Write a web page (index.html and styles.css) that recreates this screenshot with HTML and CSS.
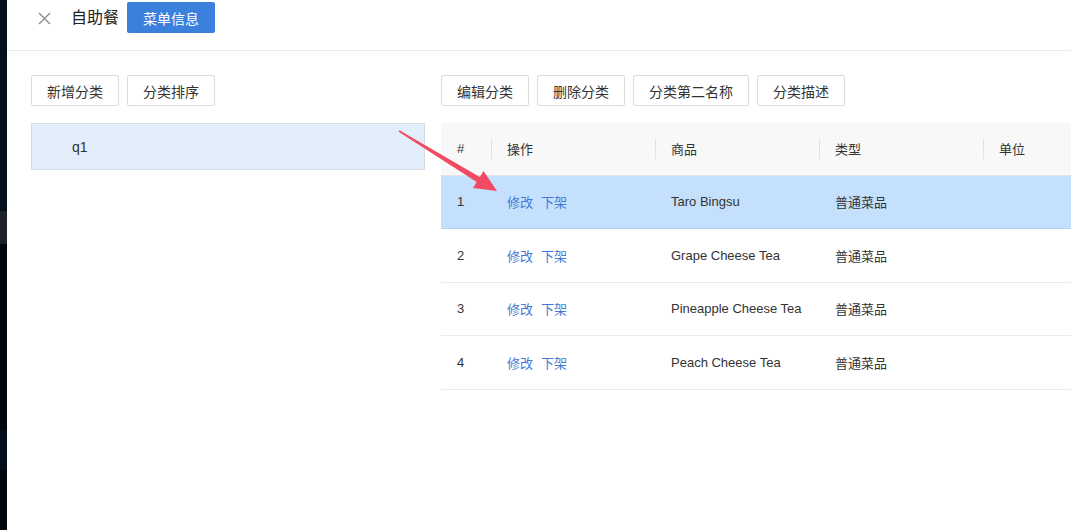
FILE: index.html
```html
<!DOCTYPE html>
<html lang="zh-CN">

<head>
    <meta charset="UTF-8">
    <meta name="viewport" content="width=device-width, initial-scale=1.0">
    <title>自助餐 - 菜单信息</title>

    <link rel="stylesheet" href="styles.css">
</head>

<body>

    <div class="page">

        <div class="edge">
            <div class="edge-top"></div>
            <div class="edge-mid"></div>
            <div class="edge-low"></div>
            <div class="edge-alt"></div>
            <div class="edge-end"></div>
        </div>

        <div class="main">

            <header class="topbar">
                <span class="close">
                    <svg width="13" height="13" viewBox="0 0 13 13">
                        <path d="M1 1 L12 12 M12 1 L1 12" stroke="#8c8c8c" stroke-width="1.4" fill="none" />
                    </svg>
                </span>
                <span class="title">自助餐</span>
                <button class="btn-primary">菜单信息</button>
            </header>

            <section class="content">

                <div class="side">
                    <div class="toolbar">
                        <button class="btn">新增分类</button>
                        <button class="btn">分类排序</button>
                    </div>
                    <div class="category active">q1</div>
                </div>

                <div class="detail">
                    <div class="toolbar">
                        <button class="btn">编辑分类</button>
                        <button class="btn">删除分类</button>
                        <button class="btn">分类第二名称</button>
                        <button class="btn">分类描述</button>
                    </div>

                    <table class="goods">
                        <thead>
                            <tr>
                                <th class="col-no">#</th>
                                <th class="col-op">操作</th>
                                <th class="col-name">商品</th>
                                <th class="col-type">类型</th>
                                <th class="col-unit">单位</th>
                            </tr>
                        </thead>
                        <tbody>
                            <tr class="selected">
                                <td>1</td>
                                <td><a class="link">修改</a><a class="link">下架</a></td>
                                <td>Taro Bingsu</td>
                                <td>普通菜品</td>
                                <td></td>
                            </tr>
                            <tr>
                                <td>2</td>
                                <td><a class="link">修改</a><a class="link">下架</a></td>
                                <td>Grape Cheese Tea</td>
                                <td>普通菜品</td>
                                <td></td>
                            </tr>
                            <tr>
                                <td>3</td>
                                <td><a class="link">修改</a><a class="link">下架</a></td>
                                <td>Pineapple Cheese Tea</td>
                                <td>普通菜品</td>
                                <td></td>
                            </tr>
                            <tr>
                                <td>4</td>
                                <td><a class="link">修改</a><a class="link">下架</a></td>
                                <td>Peach Cheese Tea</td>
                                <td>普通菜品</td>
                                <td></td>
                            </tr>
                        </tbody>
                    </table>
                </div>

            </section>

        </div>
    </div>

    <!-- annotation arrow drawn over the page -->
    <svg class="pointer" width="1071" height="530" viewBox="0 0 1071 530">
        <polygon fill="#f24a63"
            points="398.6,131.7 476.7,182.1 473,188 497,191 483.5,171 479.8,177 399.4,130.3" />
    </svg>

</body>

</html>
```

FILE: styles.css
```css
* {
    box-sizing: border-box;
}

body {
    margin: 0;
    font-family: "Liberation Sans", "Noto Sans CJK SC", sans-serif;
    color: #333;
    background-color: #fff;
    overflow: hidden;
}

.page {
    display: flex;
    width: 1071px;
    height: 530px;
}

/* dark strip of the window behind */
.edge {
    width: 7px;
    display: flex;
    flex-direction: column;
}

.edge-top {
    height: 211px;
    background-color: #03101b;
}

.edge-mid {
    height: 33px;
    background-color: #1e2226;
}

.edge-low {
    height: 186px;
    background-color: #01060c;
}

.edge-alt {
    height: 40px;
    background-color: #020e19;
}

.edge-end {
    flex: 1;
    background-color: #01060c;
}

.main {
    flex: 1;
    min-width: 0;
    overflow: hidden;
}

.topbar {
    height: 51px;
    padding-top: 2px;
    display: flex;
    align-items: flex-start;
    border-bottom: 1px solid #ececec;
}

.close {
    width: 13px;
    height: 13px;
    margin-left: 31px;
    margin-top: 10px;
    display: flex;
}

.title {
    margin-left: 20px;
    font-size: 16px;
    line-height: 31px;
    color: #222;
}

.btn-primary {
    margin-left: 8px;
    height: 31px;
    width: 88px;
    padding: 0;
    border: none;
    border-radius: 2px;
    background-color: #3b80dd;
    color: #fff;
    font-family: inherit;
    font-size: 14px;
}

.content {
    display: flex;
    gap: 16px;
    padding-top: 24px;
    padding-left: 24px;
}

.side {
    width: 394px;
    flex-shrink: 0;
}

.detail {
    flex: 1;
    min-width: 0;
    overflow: hidden;
}

.toolbar {
    display: flex;
    gap: 8px;
    margin-bottom: 17px;
}

.btn {
    height: 31px;
    padding: 0 15px;
    border: 1px solid #dcdcdc;
    border-radius: 2px;
    background-color: #fff;
    color: #333;
    font-family: inherit;
    font-size: 14px;
    white-space: nowrap;
}

.category {
    height: 47px;
    padding-left: 40px;
    display: flex;
    align-items: center;
    font-size: 14px;
    border: 1px solid #d6dce2;
}

.category.active {
    background-color: #e2eef9;
}

.goods {
    border-collapse: collapse;
    table-layout: fixed;
    width: 700px;
    font-size: 13px;
}

.col-no {
    width: 50px;
}

.col-op,
.col-name,
.col-type,
.col-unit {
    width: 164px;
}

.goods th {
    position: relative;
    height: 52px;
    padding: 0 16px;
    text-align: left;
    font-weight: normal;
    background-color: #f8f8f8;
    border-bottom: 1px solid #e3e3e3;
}

/* short divider between header cells */
.goods th + th::before {
    content: "";
    position: absolute;
    left: 0;
    top: 16px;
    height: 20px;
    border-left: 1px solid #e2e2e2;
}

.goods td {
    height: 53.6px;
    padding: 0 16px;
    border-bottom: 1px solid #ebebeb;
    white-space: nowrap;
}

.goods tr.selected td {
    background-color: #c5e0fc;
    border-bottom-color: #b5d3f2;
}

.link {
    color: #3f7ad6;
    margin-right: 8px;
    cursor: pointer;
}

.pointer {
    position: absolute;
    left: 0;
    top: 0;
    pointer-events: none;
}
```
